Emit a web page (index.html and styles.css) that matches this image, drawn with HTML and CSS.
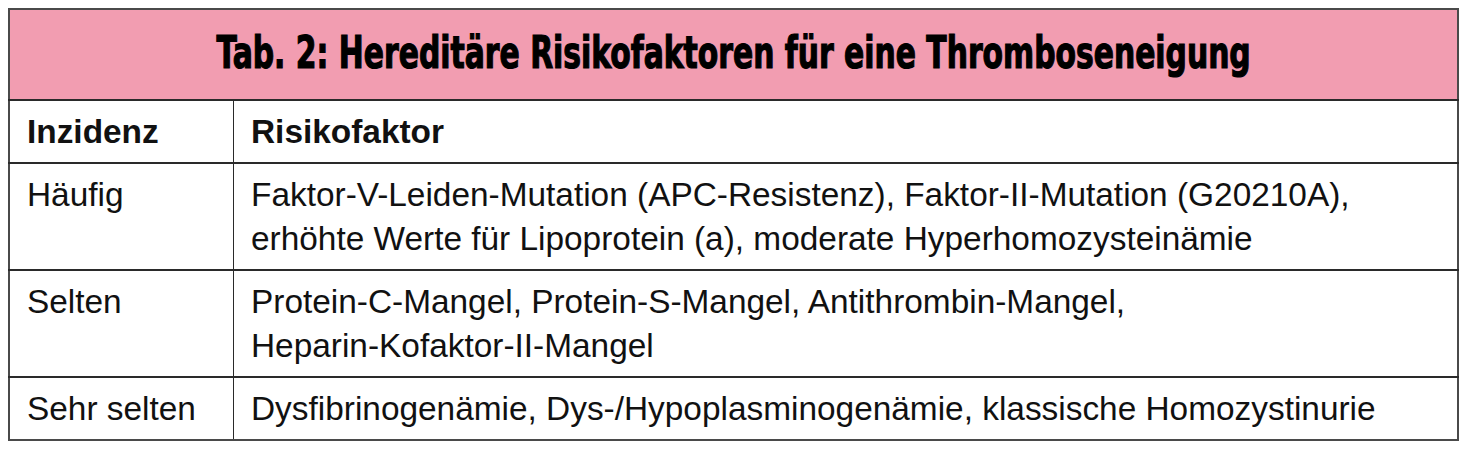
FILE: index.html
```html
<!DOCTYPE html>
<html lang="de">
<head>
<meta charset="utf-8">
<link rel="stylesheet" href="styles.css">
</head>
<body>
<table class="risk">
  <thead>
    <tr><th class="title" colspan="2"><span class="title-text">Tab. 2: Hereditäre Risikofaktoren für eine Thromboseneigung</span></th></tr>
    <tr class="head"><th class="c1">Inzidenz</th><th class="c2">Risikofaktor</th></tr>
  </thead>
  <tbody>
    <tr><td class="c1">Häufig</td><td class="c2">Faktor-V-Leiden-Mutation (APC-Resistenz), Faktor-II-Mutation (G20210A),<br>erhöhte Werte für Lipoprotein (a), moderate Hyperhomozysteinämie</td></tr>
    <tr><td class="c1">Selten</td><td class="c2">Protein-C-Mangel, Protein-S-Mangel, Antithrombin-Mangel,<br>Heparin-Kofaktor-II-Mangel</td></tr>
    <tr><td class="c1">Sehr selten</td><td class="c2">Dysfibrinogenämie, Dys-/Hypoplasminogenämie, klassische Homozystinurie</td></tr>
  </tbody>
</table>
</body>
</html>
```
FILE: styles.css
```css
html, body { background: #ffffff; }
body { margin: 8px; }
.risk {
  width: 1451px;
  border-collapse: collapse;
  border: 2px solid #4a4a4a;
  font-family: "Liberation Sans", Arial, sans-serif;
  font-size: 33.4px;
  color: #111;
}
.risk th, .risk td {
  text-align: left;
  vertical-align: top;
  line-height: 44px;
  padding: 9px 17px 8px 17px;
  border-top: 2px solid #2a2a2a;
}
.risk .title {
  background: #f29db1;
  height: 89px;
  padding: 0;
  text-align: center;
  vertical-align: middle;
  border-top: none;
}
.title-text {
  display: inline-block;
  font-family: "DejaVu Sans Condensed", "Liberation Sans", sans-serif;
  font-weight: 700;
  font-size: 44px;
  line-height: 44px;
  color: #000;
  -webkit-text-stroke: 1.2px #000;
  transform: scaleX(0.753);
  white-space: nowrap;
}
.head th { font-weight: 700; }
.c1 { width: 189px; border-right: 1.5px solid #2a2a2a; }
```
